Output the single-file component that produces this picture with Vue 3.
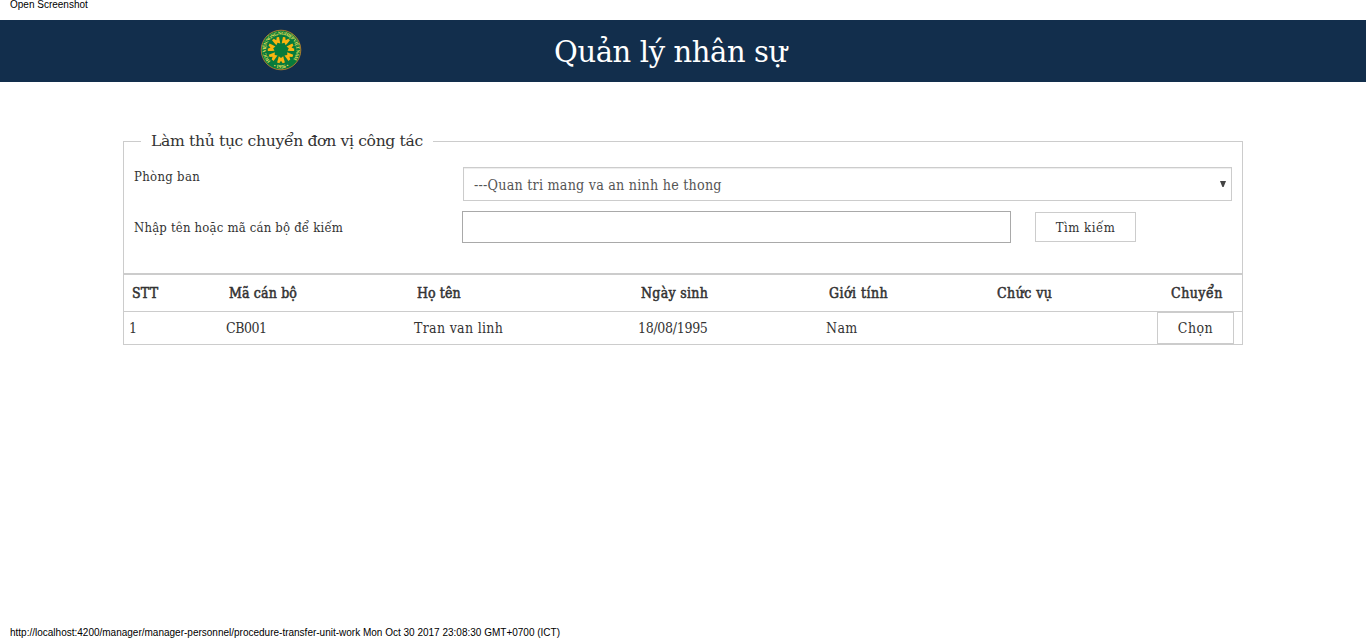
<script setup>
const petals = Array.from({ length: 7 }, (_, i) => (i * 360) / 7)

const columns = [
  { key: 'stt', label: 'STT' },
  { key: 'code', label: 'Mã cán bộ' },
  { key: 'name', label: 'Họ tên' },
  { key: 'birthday', label: 'Ngày sinh' },
  { key: 'gender', label: 'Giới tính' },
  { key: 'position', label: 'Chức vụ' },
]

const people = [
  { stt: '1', code: 'CB001', name: 'Tran van linh', birthday: '18/08/1995', gender: 'Nam', position: '' },
]
</script>

<template>
  <div class="page">
    <div class="print-head">Open Screenshot</div>

    <header class="banner">
      <svg class="logo" viewBox="-21 -21 42 42">
        <defs>
          <path id="ring-top" d="M-10.5 11.2A15.3 15.3 0 1 1 10.5 11.2" />
          <path id="ring-bottom" d="M-12 14A18.6 18.6 0 0 0 12 14" />
        </defs>
        <circle r="19.8" fill="#087a3b" stroke="#a87b2c" stroke-width="1" />
        <text class="ring-text" textLength="70"><textPath href="#ring-top">HỌC VIỆN NÔNG NGHIỆP VIỆT NAM</textPath></text>
        <text class="ring-year" text-anchor="middle"><textPath href="#ring-bottom" startOffset="50%">• 1956 •</textPath></text>
        <g v-for="angle in petals" :key="angle" :transform="`rotate(${angle})`" fill="#fbb410">
          <path d="M0 8L-2.2 6.2L-3 9.2L-3.9 12.6L-1.7 13.2L0 10.8L1.7 13.2L3.9 12.6L3 9.2L2.2 6.2Z" />
        </g>
      </svg>
      <h1><span class="fit title">Quản lý nhân sự</span></h1>
    </header>

    <main>
      <fieldset>
        <legend><span class="fit legend">Làm thủ tục chuyển đơn vị công tác</span></legend>
        <div class="row department">
          <label><span class="fit dept">Phòng ban</span></label>
          <div class="select">
            <span class="fit option">---Quan tri mang va an ninh he thong</span>
            <svg class="arrow" width="6" height="6" viewBox="0 0 6 6"><path d="M0 0H6L3.6 6H2.4Z" fill="#444" /></svg>
          </div>
        </div>
        <div class="row search">
          <label><span class="fit find">Nhập tên hoặc mã cán bộ để kiếm</span></label>
          <input type="text" />
          <button class="search-button"><span class="fit submit">Tìm kiếm</span></button>
        </div>
      </fieldset>

      <div class="table">
        <div class="grid head">
          <div v-for="c in columns" :key="c.key"><span :class="['fit', 'h-' + c.key]">{{ c.label }}</span></div>
          <div><span class="fit h-move">Chuyển</span></div>
        </div>
        <div v-for="p in people" :key="p.code" class="grid body">
          <div v-for="c in columns" :key="c.key"><span :class="['fit', 'c-' + c.key]">{{ p[c.key] }}</span></div>
          <div class="action"><button class="pick"><span class="fit choose">Chọn</span></button></div>
        </div>
      </div>
    </main>

    <footer>http://localhost:4200/manager/manager-personnel/procedure-transfer-unit-work Mon Oct 30 2017 23:08:30 GMT+0700 (ICT)</footer>
  </div>
</template>

<style>
body { background: #fff; overflow: hidden; }
</style>

<style scoped>
* { box-sizing: border-box; }
.page {
  height: 638px;
  display: flex;
  flex-direction: column;
  color: #333;
  font: 14px/20px "Roboto Slab", "DejaVu Serif Condensed", "DejaVu Serif", serif;
}
.print-head, footer {
  padding-left: 10px;
  color: #000;
  font: 10px/12px "Liberation Sans", Arial, sans-serif;
}
.print-head { height: 20px; margin-top: -1px; flex: none; }
.banner {
  height: 62px;
  margin-top: 1px;
  flex: none;
  display: flex;
  align-items: center;
  background: #122e4c;
  color: #fff;
}
.logo { width: 42px; height: 42px; margin: -2px 0 0 260px; }
.ring-text { font: bold 4.8px "Liberation Serif", serif; fill: #ece25a; }
.ring-year { font: bold 5px "Liberation Serif", serif; fill: #ece25a; }
h1 { margin: 2px 0 0 252px; font-size: 29px; line-height: 40px; font-weight: 400; }
.fit { display: inline-block; white-space: nowrap; }
.title, .legend { font-family: "Roboto Slab", "DejaVu Serif", serif; }
.title { letter-spacing: -.38px; }
.legend { letter-spacing: -.34px; }
.dept { letter-spacing: .32px; }
.find { letter-spacing: .2px; }
.option { letter-spacing: .22px; }
.submit { letter-spacing: .5px; }
.h-stt { letter-spacing: .2px; }
.h-code { letter-spacing: .15px; }
.h-name { letter-spacing: .1px; }
.h-birthday { letter-spacing: .3px; }
.h-gender { letter-spacing: .45px; }
.h-position { letter-spacing: .45px; }
.h-move { letter-spacing: .5px; }
.c-code { letter-spacing: -.5px; }
.c-birthday { letter-spacing: -.3px; }
.c-name { letter-spacing: .32px; }
.c-gender { letter-spacing: .4px; }
.choose { letter-spacing: .5px; }
main { width: 1120px; margin: 49px 0 0 123px; }
fieldset {
  height: 143px;
  margin: 0;
  padding: 0 10px;
  border: 1px solid #ccc;
}
legend { height: 21px; padding: 0 10px; margin-left: 7px; font-size: 15.6px; line-height: 21px; }
.row { display: flex; font-size: 13px; }
.row label { width: 328px; flex: none; }
.department { margin-top: 15px; }
.department label { margin-right: 1px; line-height: 19px; }
.select {
  width: 769px;
  height: 34px;
  padding: 0 5px 0 10px;
  display: flex;
  align-items: center;
  justify-content: space-between;
  border: 1px solid #ccc;
  box-shadow: inset 0 1px 1px rgba(0, 0, 0, .075);
  color: #555;
  font-size: 14.2px;
}
.option { padding-top: 2px; }
.arrow { margin-top: -1px; }
.search { margin-top: 10px; height: 32px; line-height: 34px; }
input { width: 549px; height: 32px; padding: 0; border: 1px solid #a9a9a9; background: #fff; }
button { padding: 0; border: 1px solid #ccc; background: #fff; color: #333; font: inherit; }
.search-button { width: 101px; height: 30px; margin: 1px 0 0 24px; line-height: 29px; }
.table { border: 1px solid #ccc; }
.grid { display: grid; grid-template-columns: 97px 188px 224px 188px 168px 171px 82px; font-size: 14px; }
.head { height: 36px; line-height: 36px; font-weight: 400; -webkit-text-stroke: .5px #333; }
.head > div { padding-left: 8px; }
.head > div:last-child { padding-left: 11px; }
.body { height: 33px; border-top: 1px solid #ccc; line-height: 33px; }
.body > div { padding-left: 5px; }
.body > .action { padding-left: 0; margin-left: -3px; }
.pick { display: block; width: 77px; height: 32px; line-height: 29px; }
footer { margin-top: auto; line-height: 11px; }
</style>
